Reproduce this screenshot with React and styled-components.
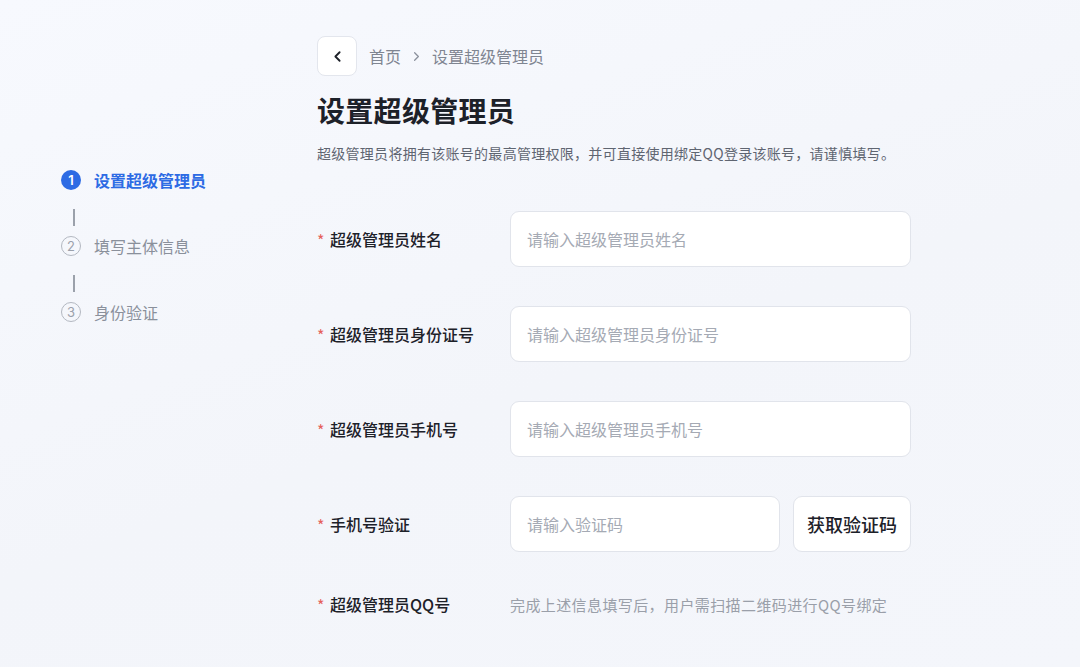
import styled, { createGlobalStyle } from 'styled-components';
import { ChevronLeft, ChevronRight } from 'lucide-react';

const GlobalStyle = createGlobalStyle`
  html, body {
    margin: 0;
    padding: 0;
  }
  body {
    font-family: "Inter", "Noto Sans CJK SC", sans-serif;
    background: #f5f7fc;
  }
  * { box-sizing: border-box; }
`;

const steps = [
  { no: 1, label: '设置超级管理员' },
  { no: 2, label: '填写主体信息' },
  { no: 3, label: '身份验证' },
];

const fields = [
  { label: '超级管理员姓名', placeholder: '请输入超级管理员姓名' },
  { label: '超级管理员身份证号', placeholder: '请输入超级管理员身份证号' },
  { label: '超级管理员手机号', placeholder: '请输入超级管理员手机号' },
];

function App() {
  return (
    <>
      <GlobalStyle />
      <Page>
        <Sidebar>
          {steps.map((s, i) => (
            <div key={s.no}>
              {i > 0 && <StepLine />}
              <Step>
                <StepDot $active={i === 0}>{s.no}</StepDot>
                <StepLabel $active={i === 0}>{s.label}</StepLabel>
              </Step>
            </div>
          ))}
        </Sidebar>

        <Main>
          <Crumbs>
            <BackButton aria-label="返回">
              <ChevronLeft size={17} strokeWidth={2.6} />
            </BackButton>
            <CrumbText>首页</CrumbText>
            <ChevronRight size={15} strokeWidth={2} color="#8a909c" />
            <CrumbText>设置超级管理员</CrumbText>
          </Crumbs>

          <Title>设置超级管理员</Title>
          <Desc>超级管理员将拥有该账号的最高管理权限，并可直接使用绑定QQ登录该账号，请谨慎填写。</Desc>

          <Form>
            {fields.map((f) => (
              <Row key={f.label}>
                <Label><Star>*</Star>{f.label}</Label>
                <Input placeholder={f.placeholder} />
              </Row>
            ))}
            <Row>
              <Label><Star>*</Star>手机号验证</Label>
              <CodeWrap>
                <Input placeholder="请输入验证码" />
                <CodeButton>获取验证码</CodeButton>
              </CodeWrap>
            </Row>
            <Row $short>
              <Label><Star>*</Star>超级管理员QQ号</Label>
              <Hint>完成上述信息填写后，用户需扫描二维码进行QQ号绑定</Hint>
            </Row>
          </Form>
        </Main>
      </Page>
    </>
  );
}

export default App;

const Page = styled.div`
  width: 1080px;
  height: 667px;
  display: flex;
  background: linear-gradient(160deg, #f7f9fe 0%, #f3f5fa 55%, #f4f6fb 100%);
  overflow: hidden;
`;

const Sidebar = styled.aside`
  width: 317px;
  padding: 170px 0 0 61px;
`;

const Step = styled.div`
  display: flex;
  align-items: center;
  gap: 13px;
  height: 20px;
`;

const StepDot = styled.span`
  width: 20px;
  height: 20px;
  border-radius: 50%;
  display: flex;
  align-items: center;
  justify-content: center;
  font-size: 13px;
  font-family: "Inter", sans-serif;
  background: ${(p) => (p.$active ? '#2d6be4' : 'transparent')};
  color: ${(p) => (p.$active ? '#fff' : '#9ba1ab')};
  border: ${(p) => (p.$active ? 'none' : '1.5px solid #b3b8c1')};
  font-weight: ${(p) => (p.$active ? 600 : 400)};
`;

const StepLabel = styled.span`
  font-size: 16px;
  line-height: 20px;
  font-family: "Noto Sans CJK SC", sans-serif;
  color: ${(p) => (p.$active ? '#2d6be4' : '#8a909b')};
  font-weight: ${(p) => (p.$active ? 600 : 400)};
`;

const StepLine = styled.div`
  width: 1.5px;
  height: 17px;
  margin: 19px 0 10px 12px;
  background: #9ba1ab;
`;

const Main = styled.main`
  flex: 1;
  padding-top: 36px;
`;

const Crumbs = styled.nav`
  display: flex;
  align-items: center;
  gap: 8px;
  height: 40px;
`;

const BackButton = styled.button`
  width: 40px;
  height: 40px;
  margin-right: 4px;
  border-radius: 8px;
  border: 1px solid #e3e6ed;
  background: #fff;
  color: #1d2129;
  display: flex;
  align-items: center;
  justify-content: center;
  padding: 0;
`;

const CrumbText = styled.span`
  font-size: 16px;
  font-family: "Noto Sans CJK SC", sans-serif;
  color: #7f8591;
`;

const Title = styled.h1`
  margin: 14px 0 0;
  font-size: 28px;
  line-height: 40px;
  font-weight: 700;
  letter-spacing: 0.3px;
  font-family: "Noto Sans CJK SC", sans-serif;
  color: #1d2129;
`;

const Desc = styled.p`
  margin: 12px 0 0;
  font-size: 14px;
  line-height: 22px;
  letter-spacing: 0.28px;
  font-family: "Noto Sans CJK SC", sans-serif;
  color: #5f6571;
`;

const Form = styled.div`
  margin-top: 47px;
  display: flex;
  flex-direction: column;
  gap: 39px;
`;

const Row = styled.div`
  display: flex;
  align-items: center;
  height: ${(p) => (p.$short ? '24px' : '56px')};
  margin-top: ${(p) => (p.$short ? '1px' : '0')};
`;

const Label = styled.label`
  width: 193px;
  display: flex;
  align-items: center;
  font-size: 16px;
  font-weight: 500;
  font-family: "Noto Sans CJK SC", sans-serif;
  color: #1d2129;
`;

const Star = styled.span`
  color: #e5605a;
  font-size: 16px;
  width: 13px;
  font-weight: 400;
  position: relative;
  top: 1px;
`;

const Input = styled.input`
  width: 401px;
  height: 56px;
  flex: 0 1 auto;
  min-width: 0;
  padding: 0 16px;
  border: 1px solid #e1e4eb;
  border-radius: 9px;
  background: #fff;
  font-size: 16px;
  font-family: "Noto Sans CJK SC", sans-serif;
  color: #1d2129;
  outline: none;
  &::placeholder {
    color: #a5aab4;
  }
`;

const CodeWrap = styled.div`
  width: 401px;
  display: flex;
  gap: 13px;

  ${Input} {
    width: auto;
    flex: 1;
  }
`;

const CodeButton = styled.button`
  width: 118px;
  height: 56px;
  border: 1px solid #e1e4eb;
  border-radius: 9px;
  background: #fff;
  font-size: 18px;
  font-weight: 500;
  font-family: "Noto Sans CJK SC", sans-serif;
  color: #1d2129;
  padding: 0;
`;

const Hint = styled.span`
  font-size: 15px;
  letter-spacing: 0.4px;
  font-family: "Noto Sans CJK SC", sans-serif;
  color: #9a9fa9;
`;
